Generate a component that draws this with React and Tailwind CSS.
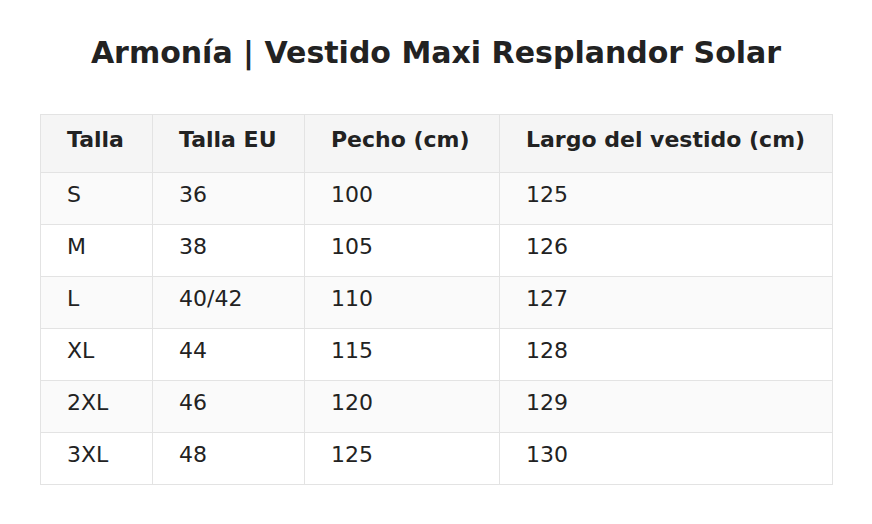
import React from 'react';

const rows = [
  ['S', '36', '100', '125'],
  ['M', '38', '105', '126'],
  ['L', '40/42', '110', '127'],
  ['XL', '44', '115', '128'],
  ['2XL', '46', '120', '129'],
  ['3XL', '48', '125', '130'],
];

export default function App() {
  return (
    <div
      className="min-h-screen bg-white text-[#222] px-10 pt-[33px]"
      style={{ fontFamily: '"DejaVu Sans", Verdana, sans-serif' }}
    >
      <h1 className="text-center text-[30px] font-bold leading-[40px]">
        Armonía | Vestido Maxi Resplandor Solar
      </h1>

      <table className="mt-[41px] w-[793px] table-fixed border-collapse text-[22px]">
        <colgroup>
          <col className="w-[112px]" />
          <col className="w-[152px]" />
          <col className="w-[195px]" />
          <col />
        </colgroup>
        <thead>
          <tr className="h-[58px] bg-[#f5f5f5]">
            {['Talla', 'Talla EU', 'Pecho (cm)', 'Largo del vestido (cm)'].map(h => (
              <th
                key={h}
                className="border border-[#e3e3e3] pl-[26px] pr-2 pb-2 text-left align-middle font-bold whitespace-nowrap"
              >
                {h}
              </th>
            ))}
          </tr>
        </thead>
        <tbody>
          {rows.map((r, i) => (
            <tr key={r[0]} className={`h-[52px] ${i % 2 === 0 ? 'bg-[#fafafa]' : 'bg-white'}`}>
              {r.map((c, j) => (
                <td key={j} className="border border-[#e3e3e3] pl-[26px] pr-2 pb-2 align-middle">
                  {c}
                </td>
              ))}
            </tr>
          ))}
        </tbody>
      </table>
    </div>
  );
}
